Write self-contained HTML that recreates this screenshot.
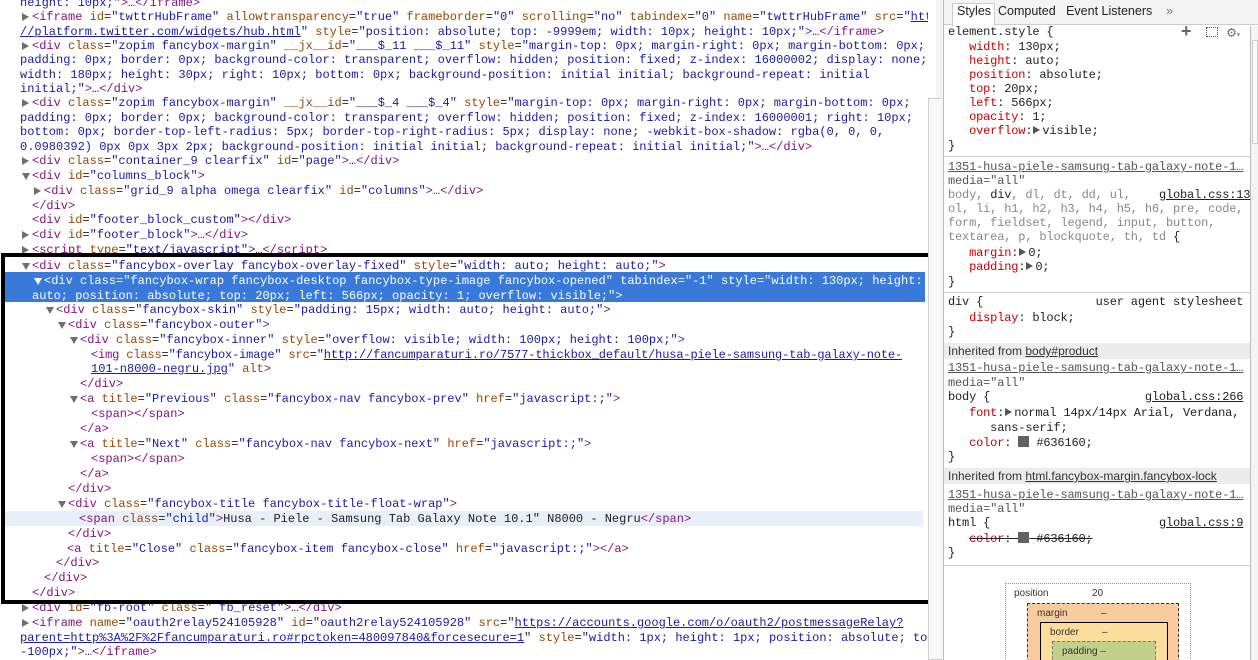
<!DOCTYPE html>
<html style="overflow:hidden;width:1258px;height:660px"><head><meta charset="utf-8"><style>
*{margin:0;padding:0;box-sizing:border-box}
body{width:1258px;height:660px;overflow:hidden;background:#fff;position:relative;font-family:"Liberation Mono",monospace;font-size:12px;color:#222}
.L{position:absolute;white-space:pre;line-height:14px;height:14px}
.t{color:#881280}.a{color:#994500}.v{color:#1a1aa6}.u{color:#1a1aa6;text-decoration:underline}
.r,.d{position:absolute;left:-10px;top:3px;width:0;height:0}
.r{border-left:7px solid #6e6e6e;border-top:4px solid transparent;border-bottom:4px solid transparent}
.d{top:4px;border-top:7px solid #6e6e6e;border-left:4px solid transparent;border-right:4px solid transparent}
.sel,.sel span{color:#fff!important}
.sel .d{border-top-color:#fff}
#box{position:absolute;left:1px;top:253px;width:934px;height:351px;border:4px solid #000}
.R{position:absolute;white-space:pre;line-height:14px;left:948px;letter-spacing:-0.17px}
.p{color:#c80000}.g{color:#888}.k{text-decoration:underline}
.sep{position:absolute;left:944px;width:306px;height:1px;background:#ccc}
.ih{position:absolute;left:944px;width:306px;height:16px;background:#ececec;font-family:"Liberation Sans",sans-serif;font-size:12px;padding-left:4px;line-height:16px;color:#333}
.tri{display:inline-block;width:0;height:0;border-left:7px solid #555;border-top:4px solid transparent;border-bottom:4px solid transparent;margin:0 2px 0 1px}
</style></head><body>
<div style="position:absolute;left:5px;top:272px;width:920px;height:30px;background:#3879d9"></div>
<div style="position:absolute;left:5px;top:511px;width:918px;height:15px;background:#e8eff9"></div>

<div class="L" style="top:-4px;left:20px"><span class="v">height: 10px;"</span><span class="t">&gt;</span>…<span class="t">&lt;/iframe&gt;</span></div>
<div class="L" style="top:10px;left:32px"><b class="r"></b><span class="t">&lt;iframe</span> <span class="a">id</span>=<span class="v">"twttrHubFrame"</span> <span class="a">allowtransparency</span>=<span class="v">"true"</span> <span class="a">frameborder</span>=<span class="v">"0"</span> <span class="a">scrolling</span>=<span class="v">"no"</span> <span class="a">tabindex</span>=<span class="v">"0"</span> <span class="a">name</span>=<span class="v">"twttrHubFrame"</span> <span class="a">src</span>=<span class="v">"</span><span class="u">http:</span></div>
<div class="L" style="top:25px;left:20px"><span class="u">//platform.twitter.com/widgets/hub.html</span><span class="v">"</span> <span class="a">style</span>=<span class="v">"position: absolute; top: -9999em; width: 10px; height: 10px;"</span><span class="t">&gt;</span>…<span class="t">&lt;/iframe&gt;</span></div>
<div class="L" style="top:39px;left:32px"><b class="r"></b><span class="t">&lt;div</span> <span class="a">class</span>=<span class="v">"zopim fancybox-margin"</span> <span class="a">__jx__id</span>=<span class="v">"___$_11 ___$_11"</span> <span class="a">style</span>=<span class="v">"margin-top: 0px; margin-right: 0px; margin-bottom: 0px;</span></div>
<div class="L" style="top:53px;left:20px"><span class="v">padding: 0px; border: 0px; background-color: transparent; overflow: hidden; position: fixed; z-index: 16000002; display: none;</span></div>
<div class="L" style="top:68px;left:20px"><span class="v">width: 180px; height: 30px; right: 10px; bottom: 0px; background-position: initial initial; background-repeat: initial</span></div>
<div class="L" style="top:82px;left:20px"><span class="v">initial;"</span><span class="t">&gt;</span>…<span class="t">&lt;/div&gt;</span></div>
<div class="L" style="top:96px;left:32px"><b class="r"></b><span class="t">&lt;div</span> <span class="a">class</span>=<span class="v">"zopim fancybox-margin"</span> <span class="a">__jx__id</span>=<span class="v">"___$_4 ___$_4"</span> <span class="a">style</span>=<span class="v">"margin-top: 0px; margin-right: 0px; margin-bottom: 0px;</span></div>
<div class="L" style="top:111px;left:20px"><span class="v">padding: 0px; border: 0px; background-color: transparent; overflow: hidden; position: fixed; z-index: 16000001; right: 10px;</span></div>
<div class="L" style="top:125px;left:20px"><span class="v">bottom: 0px; border-top-left-radius: 5px; border-top-right-radius: 5px; display: none; -webkit-box-shadow: rgba(0, 0, 0,</span></div>
<div class="L" style="top:140px;left:20px"><span class="v">0.0980392) 0px 0px 3px 2px; background-position: initial initial; background-repeat: initial initial;"</span><span class="t">&gt;</span>…<span class="t">&lt;/div&gt;</span></div>
<div class="L" style="top:154px;left:32px"><b class="r"></b><span class="t">&lt;div</span> <span class="a">class</span>=<span class="v">"container_9 clearfix"</span> <span class="a">id</span>=<span class="v">"page"</span><span class="t">&gt;</span>…<span class="t">&lt;/div&gt;</span></div>
<div class="L" style="top:169px;left:32px"><b class="d"></b><span class="t">&lt;div</span> <span class="a">id</span>=<span class="v">"columns_block"</span><span class="t">&gt;</span></div>
<div class="L" style="top:184px;left:44px"><b class="r"></b><span class="t">&lt;div</span> <span class="a">class</span>=<span class="v">"grid_9 alpha omega clearfix"</span> <span class="a">id</span>=<span class="v">"columns"</span><span class="t">&gt;</span>…<span class="t">&lt;/div&gt;</span></div>
<div class="L" style="top:199px;left:32px"><span class="t">&lt;/div&gt;</span></div>
<div class="L" style="top:213px;left:32px"><span class="t">&lt;div</span> <span class="a">id</span>=<span class="v">"footer_block_custom"</span><span class="t">&gt;&lt;/div&gt;</span></div>
<div class="L" style="top:228px;left:32px"><b class="r"></b><span class="t">&lt;div</span> <span class="a">id</span>=<span class="v">"footer_block"</span><span class="t">&gt;</span>…<span class="t">&lt;/div&gt;</span></div>
<div class="L" style="top:243px;left:32px"><b class="r"></b><span class="t">&lt;script</span> <span class="a">type</span>=<span class="v">"text/javascript"</span><span class="t">&gt;</span>…<span class="t">&lt;/script&gt;</span></div>
<div class="L" style="top:259px;left:32px"><b class="d"></b><span class="t">&lt;div</span> <span class="a">class</span>=<span class="v">"fancybox-overlay fancybox-overlay-fixed"</span> <span class="a">style</span>=<span class="v">"width: auto; height: auto;"</span><span class="t">&gt;</span></div>
<div class="L sel" style="top:274px;left:44px"><b class="d"></b><span>&lt;div</span> <span>class</span>=<span>"fancybox-wrap fancybox-desktop fancybox-type-image fancybox-opened"</span> <span>tabindex</span>=<span>"-1"</span> <span>style</span>=<span>"width: 130px; height:</span></div>
<div class="L sel" style="top:289px;left:32px"><span>auto; position: absolute; top: 20px; left: 566px; opacity: 1; overflow: visible;"&gt;</span></div>
<div class="L" style="top:303px;left:56px"><b class="d"></b><span class="t">&lt;div</span> <span class="a">class</span>=<span class="v">"fancybox-skin"</span> <span class="a">style</span>=<span class="v">"padding: 15px; width: auto; height: auto;"</span><span class="t">&gt;</span></div>
<div class="L" style="top:318px;left:68px"><b class="d"></b><span class="t">&lt;div</span> <span class="a">class</span>=<span class="v">"fancybox-outer"</span><span class="t">&gt;</span></div>
<div class="L" style="top:333px;left:80px"><b class="d"></b><span class="t">&lt;div</span> <span class="a">class</span>=<span class="v">"fancybox-inner"</span> <span class="a">style</span>=<span class="v">"overflow: visible; width: 100px; height: 100px;"</span><span class="t">&gt;</span></div>
<div class="L" style="top:348px;left:91px;letter-spacing:-0.15px"><span class="t">&lt;img</span> <span class="a">class</span>=<span class="v">"fancybox-image"</span> <span class="a">src</span>=<span class="v">"</span><span class="u">http://fancumparaturi.ro/7577-thickbox_default/husa-piele-samsung-tab-galaxy-note-</span></div>
<div class="L" style="top:362px;left:91px"><span class="u">101-n8000-negru.jpg</span><span class="v">"</span> <span class="a">alt</span><span class="t">&gt;</span></div>
<div class="L" style="top:377px;left:80px"><span class="t">&lt;/div&gt;</span></div>
<div class="L" style="top:392px;left:80px"><b class="d"></b><span class="t">&lt;a</span> <span class="a">title</span>=<span class="v">"Previous"</span> <span class="a">class</span>=<span class="v">"fancybox-nav fancybox-prev"</span> <span class="a">href</span>=<span class="v">"javascript:;"</span><span class="t">&gt;</span></div>
<div class="L" style="top:407px;left:91px"><span class="t">&lt;span&gt;&lt;/span&gt;</span></div>
<div class="L" style="top:422px;left:80px"><span class="t">&lt;/a&gt;</span></div>
<div class="L" style="top:437px;left:80px"><b class="d"></b><span class="t">&lt;a</span> <span class="a">title</span>=<span class="v">"Next"</span> <span class="a">class</span>=<span class="v">"fancybox-nav fancybox-next"</span> <span class="a">href</span>=<span class="v">"javascript:;"</span><span class="t">&gt;</span></div>
<div class="L" style="top:452px;left:91px"><span class="t">&lt;span&gt;&lt;/span&gt;</span></div>
<div class="L" style="top:467px;left:80px"><span class="t">&lt;/a&gt;</span></div>
<div class="L" style="top:482px;left:68px"><span class="t">&lt;/div&gt;</span></div>
<div class="L" style="top:497px;left:68px"><b class="d"></b><span class="t">&lt;div</span> <span class="a">class</span>=<span class="v">"fancybox-title fancybox-title-float-wrap"</span><span class="t">&gt;</span></div>
<div class="L" style="top:512px;left:79px"><span class="t">&lt;span</span> <span class="a">class</span>=<span class="v">"child"</span><span class="t">&gt;</span>Husa - Piele - Samsung Tab Galaxy Note 10.1" N8000 - Negru<span class="t">&lt;/span&gt;</span></div>
<div class="L" style="top:527px;left:68px"><span class="t">&lt;/div&gt;</span></div>
<div class="L" style="top:542px;left:67px"><span class="t">&lt;a</span> <span class="a">title</span>=<span class="v">"Close"</span> <span class="a">class</span>=<span class="v">"fancybox-item fancybox-close"</span> <span class="a">href</span>=<span class="v">"javascript:;"</span><span class="t">&gt;&lt;/a&gt;</span></div>
<div class="L" style="top:556px;left:56px"><span class="t">&lt;/div&gt;</span></div>
<div class="L" style="top:571px;left:44px"><span class="t">&lt;/div&gt;</span></div>
<div class="L" style="top:586px;left:32px"><span class="t">&lt;/div&gt;</span></div>
<div class="L" style="top:601px;left:32px"><b class="r"></b><span class="t">&lt;div</span> <span class="a">id</span>=<span class="v">"fb-root"</span> <span class="a">class</span>=<span class="v">" fb_reset"</span><span class="t">&gt;</span>…<span class="t">&lt;/div&gt;</span></div>
<div class="L" style="top:616px;left:32px"><b class="r"></b><span class="t">&lt;iframe</span> <span class="a">name</span>=<span class="v">"oauth2relay524105928"</span> <span class="a">id</span>=<span class="v">"oauth2relay524105928"</span> <span class="a">src</span>=<span class="v">"</span><span class="u">https://accounts.google.com/o/oauth2/postmessageRelay?</span></div>
<div class="L" style="top:631px;left:20px"><span class="u">parent=http%3A%2F%2Ffancumparaturi.ro#rpctoken=480097840&amp;forcesecure=1</span><span class="v">"</span> <span class="a">style</span>=<span class="v">"width: 1px; height: 1px; position: absolute; top:</span></div>
<div class="L" style="top:645px;left:20px"><span class="v">-100px;"</span><span class="t">&gt;</span>…<span class="t">&lt;/iframe&gt;</span></div>

<div id="box"></div>

<!-- left scrollbar -->
<div style="position:absolute;left:928px;top:0;width:15px;height:660px;background:#fff"></div>
<div style="position:absolute;left:936px;top:0;width:7px;height:660px;background:#f3f3f3"></div>
<div style="position:absolute;left:928px;top:98px;width:14px;height:562px;background:#f7f7f7;border:1px solid #cfcfcf;border-right:none"></div>
<div style="position:absolute;left:943px;top:0;width:1px;height:660px;background:#bbb"></div>

<!-- right panel -->
<div style="position:absolute;left:944px;top:0;width:314px;height:25px;background:#f3f3f3;border-bottom:1px solid #ccc"></div>
<div style="position:absolute;left:952px;top:3px;width:43px;height:23px;background:#fff;border:1px solid #ccc;border-bottom:none"></div>
<div style="position:absolute;top:4px;left:957px;font-family:'Liberation Sans',sans-serif;font-size:12.5px;color:#222;white-space:pre">Styles  Computed   Event Listeners    <span style="color:#777">»</span></div>
<div style="position:absolute;left:1250px;top:26px;width:1px;height:634px;background:#bbb"></div>
<div style="position:absolute;left:1251px;top:26px;width:7px;height:634px;background:#f3f3f3"></div>
<div style="position:absolute;left:1252px;top:40px;width:6px;height:104px;background:#fafafa;border:1px solid #ccc"></div>

<div class="R" style="top:25px">element.style {</div>
<div style="position:absolute;left:1181px;top:21px;font-family:'Liberation Sans',sans-serif;font-size:18px;color:#666;font-weight:bold">+</div>
<div style="position:absolute;left:1206px;top:27px;width:12px;height:10px;border:1px dotted #555"></div>
<div style="position:absolute;left:1227px;top:23px;font-size:15px;color:#777">⚙<span style="font-size:8px">▾</span></div>
<div class="R" style="top:40px">   <span class="p">width</span>: 130px;</div>
<div class="R" style="top:54px">   <span class="p">height</span>: auto;</div>
<div class="R" style="top:68px">   <span class="p">position</span>: absolute;</div>
<div class="R" style="top:82px">   <span class="p">top</span>: 20px;</div>
<div class="R" style="top:96px">   <span class="p">left</span>: 566px;</div>
<div class="R" style="top:110px">   <span class="p">opacity</span>: 1;</div>
<div class="R" style="top:124px">   <span class="p">overflow</span>:<span class="tri"></span>visible;</div>
<div class="R" style="top:139px">}</div>
<div class="sep" style="top:156px"></div>
<div class="R" style="top:160px;color:#555"><span class="k">1351-husa-piele-samsung-tab-galaxy-note-1…</span></div>
<div class="R" style="top:174px;color:#555">media="all"</div>
<div class="R" style="top:188px;color:#888">body, <span style="color:#222">div</span>, dl, dt, dd, ul,    <span class="k" style="color:#222">global.css:13</span></div>
<div class="R" style="top:202px;color:#888">ol, li, h1, h2, h3, h4, h5, h6, pre, code,</div>
<div class="R" style="top:216px;color:#888">form, fieldset, legend, input, button,</div>
<div class="R" style="top:230px;color:#888">textarea, p, blockquote, th, td <span style="color:#222">{</span></div>
<div class="R" style="top:246px">   <span class="p">margin</span>:<span class="tri"></span>0;</div>
<div class="R" style="top:260px">   <span class="p">padding</span>:<span class="tri"></span>0;</div>
<div class="R" style="top:275px">}</div>
<div class="sep" style="top:292px"></div>
<div class="R" style="top:295px">div {                user agent stylesheet</div>
<div class="R" style="top:311px">   <span class="p">display</span>: block;</div>
<div class="R" style="top:325px">}</div>
<div class="ih" style="top:343px">Inherited from <span style="text-decoration:underline">body#product</span></div>
<div class="R" style="top:361px;color:#555"><span class="k">1351-husa-piele-samsung-tab-galaxy-note-1…</span></div>
<div class="R" style="top:376px;color:#555">media="all"</div>
<div class="R" style="top:390px">body {                      <span class="k">global.css:266</span></div>
<div class="R" style="top:406px">   <span class="p">font</span>:<span class="tri"></span>normal 14px/14px Arial, Verdana,</div>
<div class="R" style="top:421px">      sans-serif;</div>
<div class="R" style="top:436px">   <span class="p">color</span>: <span style="display:inline-block;width:11px;height:11px;background:#636160;vertical-align:-1px"></span> #636160;</div>
<div class="R" style="top:450px">}</div>
<div class="ih" style="top:468px">Inherited from <span style="text-decoration:underline">html.fancybox-margin.fancybox-lock</span></div>
<div class="R" style="top:488px;color:#555"><span class="k">1351-husa-piele-samsung-tab-galaxy-note-1…</span></div>
<div class="R" style="top:502px;color:#555">media="all"</div>
<div class="R" style="top:516px">html {                        <span class="k">global.css:9</span></div>
<div class="R" style="top:532px">   <span style="text-decoration:line-through"><span class="p">color</span>: <span style="display:inline-block;width:11px;height:11px;background:#636160;vertical-align:-1px"></span> #636160;</span></div>
<div class="R" style="top:546px">}</div>
<div class="sep" style="top:565px"></div>

<div style="position:absolute;left:1005px;top:583px;width:186px;height:77px;overflow:hidden;border:1px dotted #999;border-bottom:none;font-family:'Liberation Sans',sans-serif;font-size:10px;color:#333">
<div style="position:absolute;left:8px;top:4px">position</div><div style="position:absolute;left:86px;top:4px">20</div>
<div style="position:absolute;left:21px;top:19px;width:152px;height:80px;background:#f9cc9d;border:1px dashed #333">
<div style="position:absolute;left:9px;top:4px">margin</div><div style="position:absolute;left:73px;top:4px">–</div>
<div style="position:absolute;left:12px;top:18px;width:128px;height:70px;background:#fddd9b;border:1px solid #000">
<div style="position:absolute;left:9px;top:4px">border</div><div style="position:absolute;left:61px;top:4px">–</div>
<div style="position:absolute;left:11px;top:18px;width:104px;height:60px;background:#c3d08b;border:1px dashed #777">
<div style="position:absolute;left:9px;top:4px">padding –</div>
</div></div></div></div>
</body></html>
